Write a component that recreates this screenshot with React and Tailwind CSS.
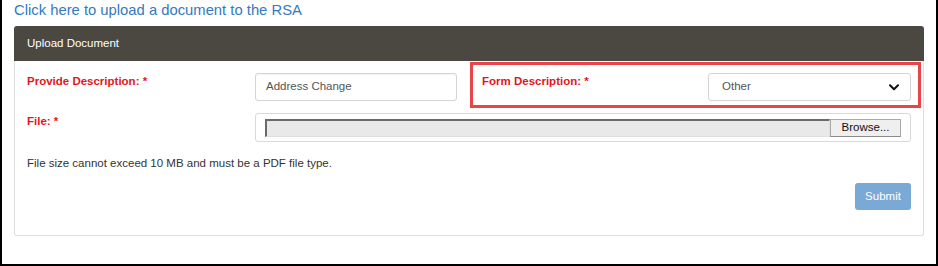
export default function App() {
  const font = { fontFamily: '"Liberation Sans", Arial, sans-serif' };
  return (
    <div
      className="relative w-[938px] h-[266px] bg-white border-l-2 border-r-2 border-b-2 border-black overflow-hidden text-[11.5px] text-[#333]"
      style={font}
    >
      <div className="pl-[12px] h-[26px]">
        <a className="block text-[14.8px] leading-[21px] text-[#3579bf]">
          Click here to upload a document to the RSA
        </a>
      </div>

      <div className="ml-[12px] w-[910px]">
        <div className="h-[35px] bg-[#4b4842] rounded-t-[3px] flex items-center pl-[13px] text-white text-[11.5px]">
          Upload Document
        </div>
        <div className="border-x border-b border-[#dedede] rounded-b-[3px] px-[12px] pt-[12px] pb-[25px]">
          {/* Row 1 */}
          <div className="flex items-start">
            <div className="w-[228px] leading-[16px] font-bold text-[#e3161b]">
              Provide Description: *
            </div>
            <div className="w-[202px] h-[28px] border border-[#d4d4d4] rounded-[3px] flex items-center pl-[10px] text-[#555] shadow-[inset_0_1px_1px_rgba(0,0,0,0.05)]">
              Address Change
            </div>
            <div className="w-[25px]" />
            <div className="w-[226px] leading-[16px] font-bold text-[#e3161b]">
              Form Description: *
            </div>
            <div className="flex-1 h-[28px] border border-[#d4d4d4] rounded-[3px] flex items-center justify-between pl-[13px] pr-[11px] text-[#555]">
              <span>Other</span>
              <svg width="10" height="7" viewBox="0 0 10 7" className="block">
                <path d="M1 1.2 L5 5.2 L9 1.2" fill="none" stroke="#111" strokeWidth="2" strokeLinecap="round" strokeLinejoin="round" />
              </svg>
            </div>
          </div>

          {/* Row 2 */}
          <div className="flex items-start mt-[12px]">
            <div className="w-[228px] leading-[16px] font-bold text-[#e3161b]">File: *</div>
            <div className="flex-1 h-[29px] border border-[#d9d9d9] rounded-[3px] flex items-center pl-[9px] pr-[9px]">
              <div className="flex-1 h-[18px] bg-[#e9e9e9] border-t-2 border-l-2 border-t-[#6a6a6a] border-l-[#6a6a6a] border-b border-r border-b-[#e0e0e0] border-r-[#e0e0e0]" />
              <div className="w-[71px] h-[18px] bg-[#efefef] border border-[#a9a9a9] border-b-[#8a8a8a] flex items-center justify-center text-[#111] text-[11.5px] leading-none">
                Browse...
              </div>
            </div>
          </div>

          {/* Disclaimer */}
          <div className="mt-[13px] leading-[16px] text-[#333]">
            File size cannot exceed 10 MB and must be a PDF file type.
          </div>

          {/* Submit */}
          <div className="flex justify-end mt-[12px]">
            <div className="w-[56px] h-[27px] bg-[#7aa9d6] rounded-[3px] flex items-center justify-center text-white text-[11.5px]">
              Submit
            </div>
          </div>
        </div>
      </div>

      {/* Red annotation box */}
      <div className="absolute left-[468px] top-[62px] w-[451px] h-[46px] border-[3px] border-[#e8444a] pointer-events-none" />
    </div>
  );
}
